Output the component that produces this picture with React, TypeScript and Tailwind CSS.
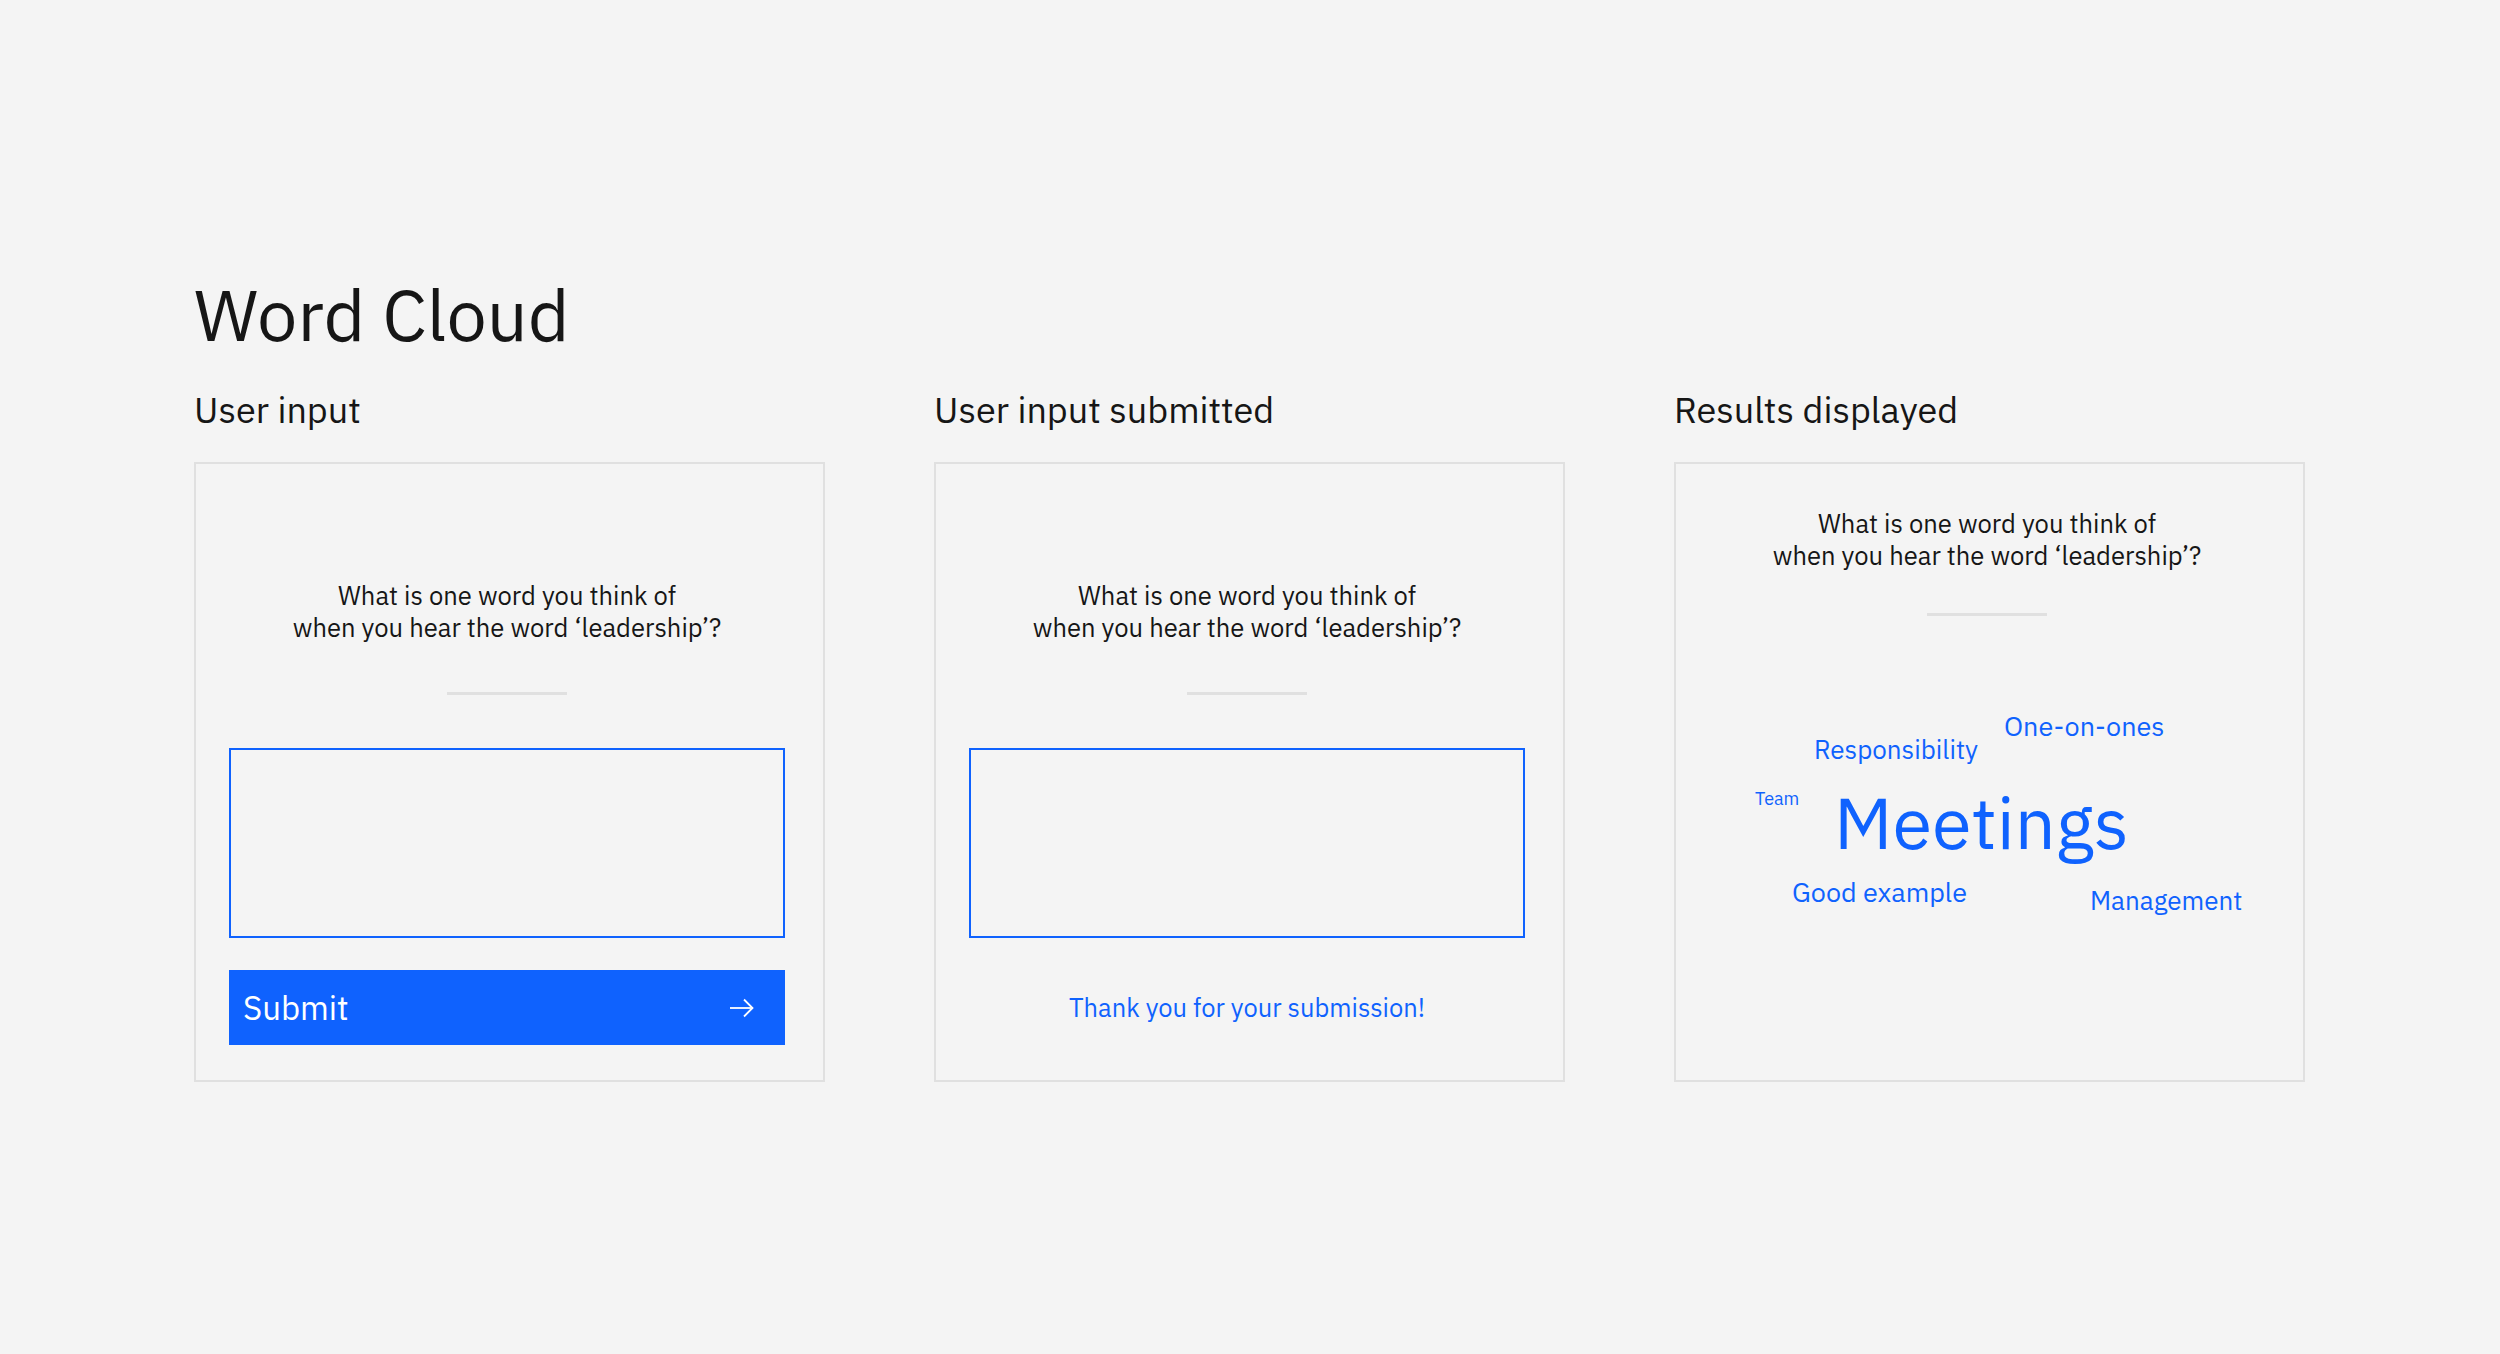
const font = { fontFamily: '"IBM Plex Sans", Roboto, "Noto Sans", sans-serif' };

function Question({ className = '' }: { className?: string }) {
  return (
    <p className={`text-center text-[25.6px] leading-[32px] text-[#161616] ${className}`}>
      What is one word you think of
      <br />
      when you hear the word ‘leadership’?
    </p>
  );
}

function Divider({ className = '' }: { className?: string }) {
  return <div className={`mx-auto h-[3px] w-[120px] bg-[#e0e0e0] ${className}`} />;
}

function ArrowRight() {
  return (
    <svg width="26" height="20" viewBox="0 0 26 20" fill="none" stroke="currentColor" strokeWidth="1.8">
      <path d="M1 10h23" />
      <path d="M15 1.5l8.5 8.5-8.5 8.5" />
    </svg>
  );
}

function Card({ children }: { children: React.ReactNode }) {
  return (
    <div className="flex h-[620px] w-[631px] flex-col border-2 border-[#e0e0e0] bg-[#f4f4f4]">
      {children}
    </div>
  );
}

function Column({ label, children }: { label: string; children: React.ReactNode }) {
  return (
    <div className="flex flex-col">
      <h2 className="mb-[34px] text-[36px] leading-none text-[#161616]">{label}</h2>
      {children}
    </div>
  );
}

const words = [
  { text: 'One-on-ones', left: 328, top: 96, size: 'text-[27px]' },
  { text: 'Responsibility', left: 138, top: 120, size: 'text-[26px]' },
  { text: 'Team', left: 79, top: 174, size: 'text-[18px]' },
  { text: 'Meetings', left: 158, top: 170, size: 'text-[72px]' },
  { text: 'Good example', left: 116, top: 262, size: 'text-[27px]' },
  { text: 'Management', left: 414, top: 271, size: 'text-[26px]' },
];

export default function App() {
  return (
    <div className="min-h-screen bg-[#f4f4f4] pl-[194px] pt-[278px]" style={font}>
      <h1 className="mb-[42px] text-[72px] font-normal leading-none text-[#161616]">Word Cloud</h1>

      <div className="flex gap-[109px]">
        <Column label="User input">
          <Card>
            <div className="flex flex-col pb-[34px] pl-[33px] pr-[38px] pt-[116px]">
              <Question />
              <Divider className="mt-[48px]" />
              <div className="mt-[53px] h-[190px] border-2 border-[#0f62fe]" />
              <button className="mt-[32px] flex h-[75px] items-center justify-between bg-[#0f62fe] pl-[14px] pr-[30px] text-[33px] text-white">
                <span>Submit</span>
                <ArrowRight />
              </button>
            </div>
          </Card>
        </Column>

        <Column label="User input submitted">
          <Card>
            <div className="flex flex-col pb-[34px] pl-[33px] pr-[38px] pt-[116px]">
              <Question />
              <Divider className="mt-[48px]" />
              <div className="mt-[53px] h-[190px] border-2 border-[#0f62fe]" />
              <div className="mt-[33px] flex h-[75px] items-center justify-center text-[25.5px] text-[#0f62fe]">
                Thank you for your submission!
              </div>
            </div>
          </Card>
        </Column>

        <Column label="Results displayed">
          <Card>
            <div className="pl-[33px] pr-[38px] pt-[44px]">
              <Question />
              <Divider className="mt-[41px]" />
            </div>
            <div className="relative flex-1">
              {words.map((w) => (
                <span
                  key={w.text}
                  className={`absolute whitespace-nowrap leading-none text-[#0f62fe] ${w.size}`}
                  style={{ left: w.left, top: w.top }}
                >
                  {w.text}
                </span>
              ))}
            </div>
          </Card>
        </Column>
      </div>
    </div>
  );
}
